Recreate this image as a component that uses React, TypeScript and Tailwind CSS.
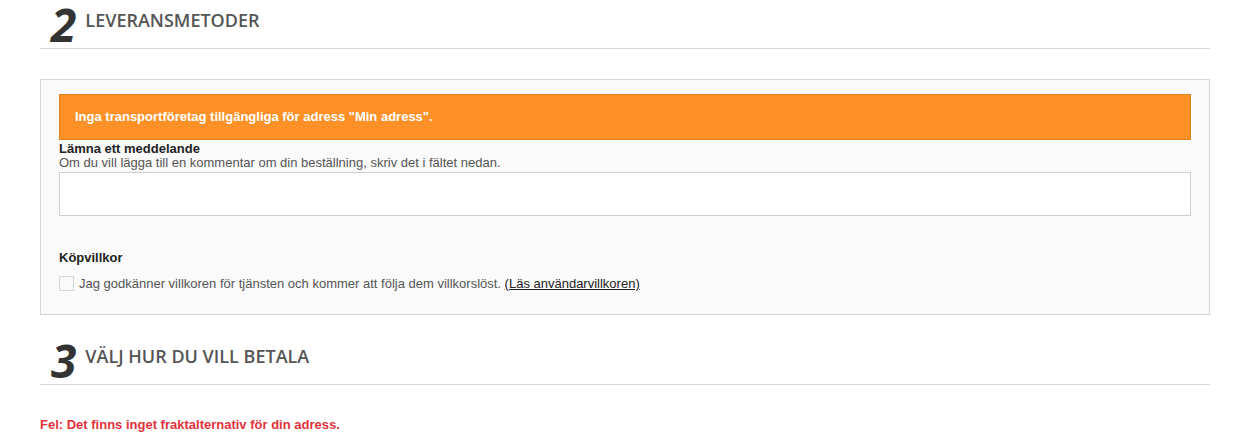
import React from "react";

function Heading({ n, title }: { n: string; title: string }) {
  return (
    <div className="flex items-end h-[49px] border-b border-[#d6d6d6] pl-[11px] pb-[1px]">
      <span className="font-['Open_Sans',sans-serif] italic font-bold text-[46px] leading-[46px] text-[#333] pr-[4px] pl-[2px] -ml-[2px]">
        {n}
      </span>
      <span className="ml-[5px] mb-[17px] font-['Open_Sans',sans-serif] font-semibold text-[18px] leading-[20px] text-[#555]">
        {title}
      </span>
    </div>
  );
}

export default function App() {
  return (
    <div className="w-[1245px] h-[440px] bg-white font-['Liberation_Sans',Arial,sans-serif] text-[13px]">
      <div className="ml-[40px] w-[1170px]">
        <Heading n="2" title="LEVERANSMETODER" />
        <div className="mt-[30px] border border-[#d6d6d6] bg-[#fafafa] px-[18px] pt-[14px] pb-[23px]">
          <div className="h-[46px] bg-[#fd9127] border border-[#e5801e] flex items-center pl-[15px] text-white font-bold leading-[16px]">
            Inga transportföretag tillgängliga för adress "Min adress".
          </div>
          <div className="mt-[2px] font-bold text-[#222] leading-[14px]">Lämna ett meddelande</div>
          <div className="text-[#555] leading-[14px]">
            Om du vill lägga till en kommentar om din beställning, skriv det i fältet nedan.
          </div>
          <div className="mt-[2px] h-[44px] bg-white border border-[#cfcfcf]" />
          <div className="mt-[35px] font-bold text-[#222] leading-[14px]">Köpvillkor</div>
          <div className="mt-[11px] flex items-center">
            <span className="w-[15px] h-[15px] border border-[#d8d8d8] bg-[#fafafa]" />
            <span className="ml-[5px] text-[#555] leading-[15px]">
              Jag godkänner villkoren för tjänsten och kommer att följa dem villkorslöst.{" "}
              <a className="underline text-[#222]">(Läs användarvillkoren)</a>
            </span>
          </div>
        </div>
        <div className="mt-[21px]">
          <Heading n="3" title="VÄLJ HUR DU VILL BETALA" />
        </div>
        <div className="mt-[33px] font-bold text-[#e2313b] leading-[14px]">
          Fel: Det finns inget fraktalternativ för din adress.
        </div>
      </div>
    </div>
  );
}
